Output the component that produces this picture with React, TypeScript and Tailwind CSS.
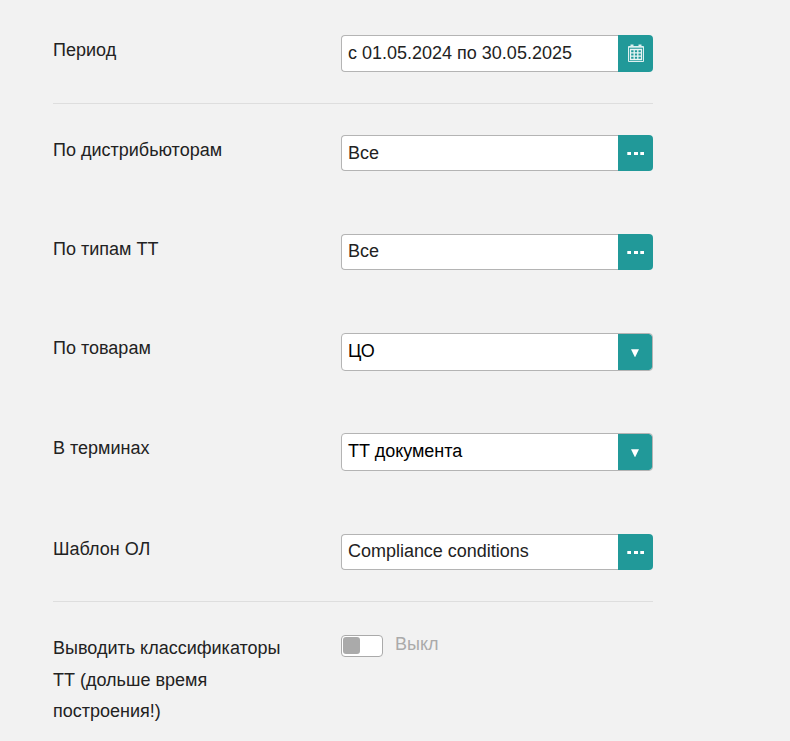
import React from 'react';

interface FieldRowProps {
  label: string;
  className: string;
  children: React.ReactNode;
}

const FieldRow: React.FC<FieldRowProps> = ({ label, className, children }) => (
  <div className={`flex items-start ${className}`}>
    <div className="w-[288px] shrink-0 pr-10 pt-[-1px] leading-[31.5px]">{label}</div>
    {children}
  </div>
);

const CalendarIcon = () => (
  <svg width="16" height="19" viewBox="0 0 16 19" fill="none" stroke="white">
    <path d="M0.5 2.5h15v15h-15z" strokeOpacity="0.85" />
    <path d="M1 3.5h14" strokeOpacity="0.6" />
    <path d="M2.5 1.2h3M10.5 1.2h3" strokeWidth="1.6" strokeOpacity="0.85" />
    <path d="M2.5 5.5h11v10h-11zM6.2 5.5v10M9.8 5.5v10M2.5 8.8h11M2.5 12.2h11" strokeWidth="1.3" strokeOpacity="0.9" />
  </svg>
);

const DotsIcon = () => (
  <svg width="17" height="3" viewBox="0 0 17 3" fill="white" shapeRendering="crispEdges">
    <path d="M1 0h3v3H1zM7 0h4v3H7zM14 0h3v3h-3z" />
    <path d="M0 0h1v3H0zM13 0h1v3h-1z" fillOpacity="0.7" />
  </svg>
);

const ArrowIcon = () => (
  <svg className="mt-px" width="8" height="8" viewBox="0 0 8 8" fill="white">
    <path d="M0 0.3h8L4.2 8H3.8z" />
  </svg>
);

interface PickerProps {
  value: string;
  className: string;
  icon: React.ReactNode;
}

const Picker: React.FC<PickerProps> = ({ value, className, icon }) => (
  <div className={`flex w-[312px] text-[#222] ${className}`}>
    <div className="flex-1 rounded-l-[4px] border border-r-0 border-[#b4b4b4] bg-white pl-1.5">{value}</div>
    <button className="flex w-[35px] items-center justify-center rounded-r-[4px] bg-[#219999]">{icon}</button>
  </div>
);

const Select: React.FC<{ value: string }> = ({ value }) => (
  <div className="flex h-[38px] w-[312px] overflow-hidden rounded-[4px] border border-[#b4b4b4] bg-white leading-[34px] tracking-[-0.05px] text-black">
    <div className="flex-1 pl-1.5">{value}</div>
    <button className="flex w-[34px] items-center justify-center rounded-r-[3px] bg-[#219999]">
      <ArrowIcon />
    </button>
  </div>
);

const App: React.FC = () => {
  return (
    <div className="h-[741px] overflow-hidden bg-[#f2f2f2] pl-[53px] pt-[35px] font-['Liberation_Sans',Arial,sans-serif] text-[18px] text-[#222]">
      <div className="w-[600px]">
        <FieldRow label="Период" className="h-[68px]">
          <Picker value="с 01.05.2024 по 30.05.2025" className="h-[37px] leading-[34px]" icon={<CalendarIcon />} />
        </FieldRow>
        <div className="border-t border-[#dedede] pt-[31px]">
          <FieldRow label="По дистрибьюторам" className="h-[99px]">
            <Picker value="Все" className="h-9 leading-[34px]" icon={<DotsIcon />} />
          </FieldRow>
          <FieldRow label="По типам ТТ" className="h-[99px]">
            <Picker value="Все" className="h-9 leading-[32px]" icon={<DotsIcon />} />
          </FieldRow>
          <FieldRow label="По товарам" className="h-[100px]">
            <Select value="ЦО" />
          </FieldRow>
          <FieldRow label="В терминах" className="h-[101px]">
            <Select value="ТТ документа" />
          </FieldRow>
          <FieldRow label="Шаблон ОЛ" className="h-[67px]">
            <Picker value="Compliance conditions" className="h-9 leading-[32px] tracking-[-0.02px]" icon={<DotsIcon />} />
          </FieldRow>
        </div>
        <div className="border-t border-[#dedede] pt-[31px]">
          <FieldRow label="Выводить классификаторы ТТ (дольше время построения!)" className="">
            <div className="mt-0.5 h-[22px] w-[42px] rounded-[4px] border border-[#aaa] bg-white p-px">
              <div className="h-[17px] w-[17px] rounded-[3px] bg-[#aaa]" />
            </div>
            <span className="ml-3 leading-[22px] text-[#aaa]">Выкл</span>
          </FieldRow>
        </div>
      </div>
    </div>
  );
};

export default App;
